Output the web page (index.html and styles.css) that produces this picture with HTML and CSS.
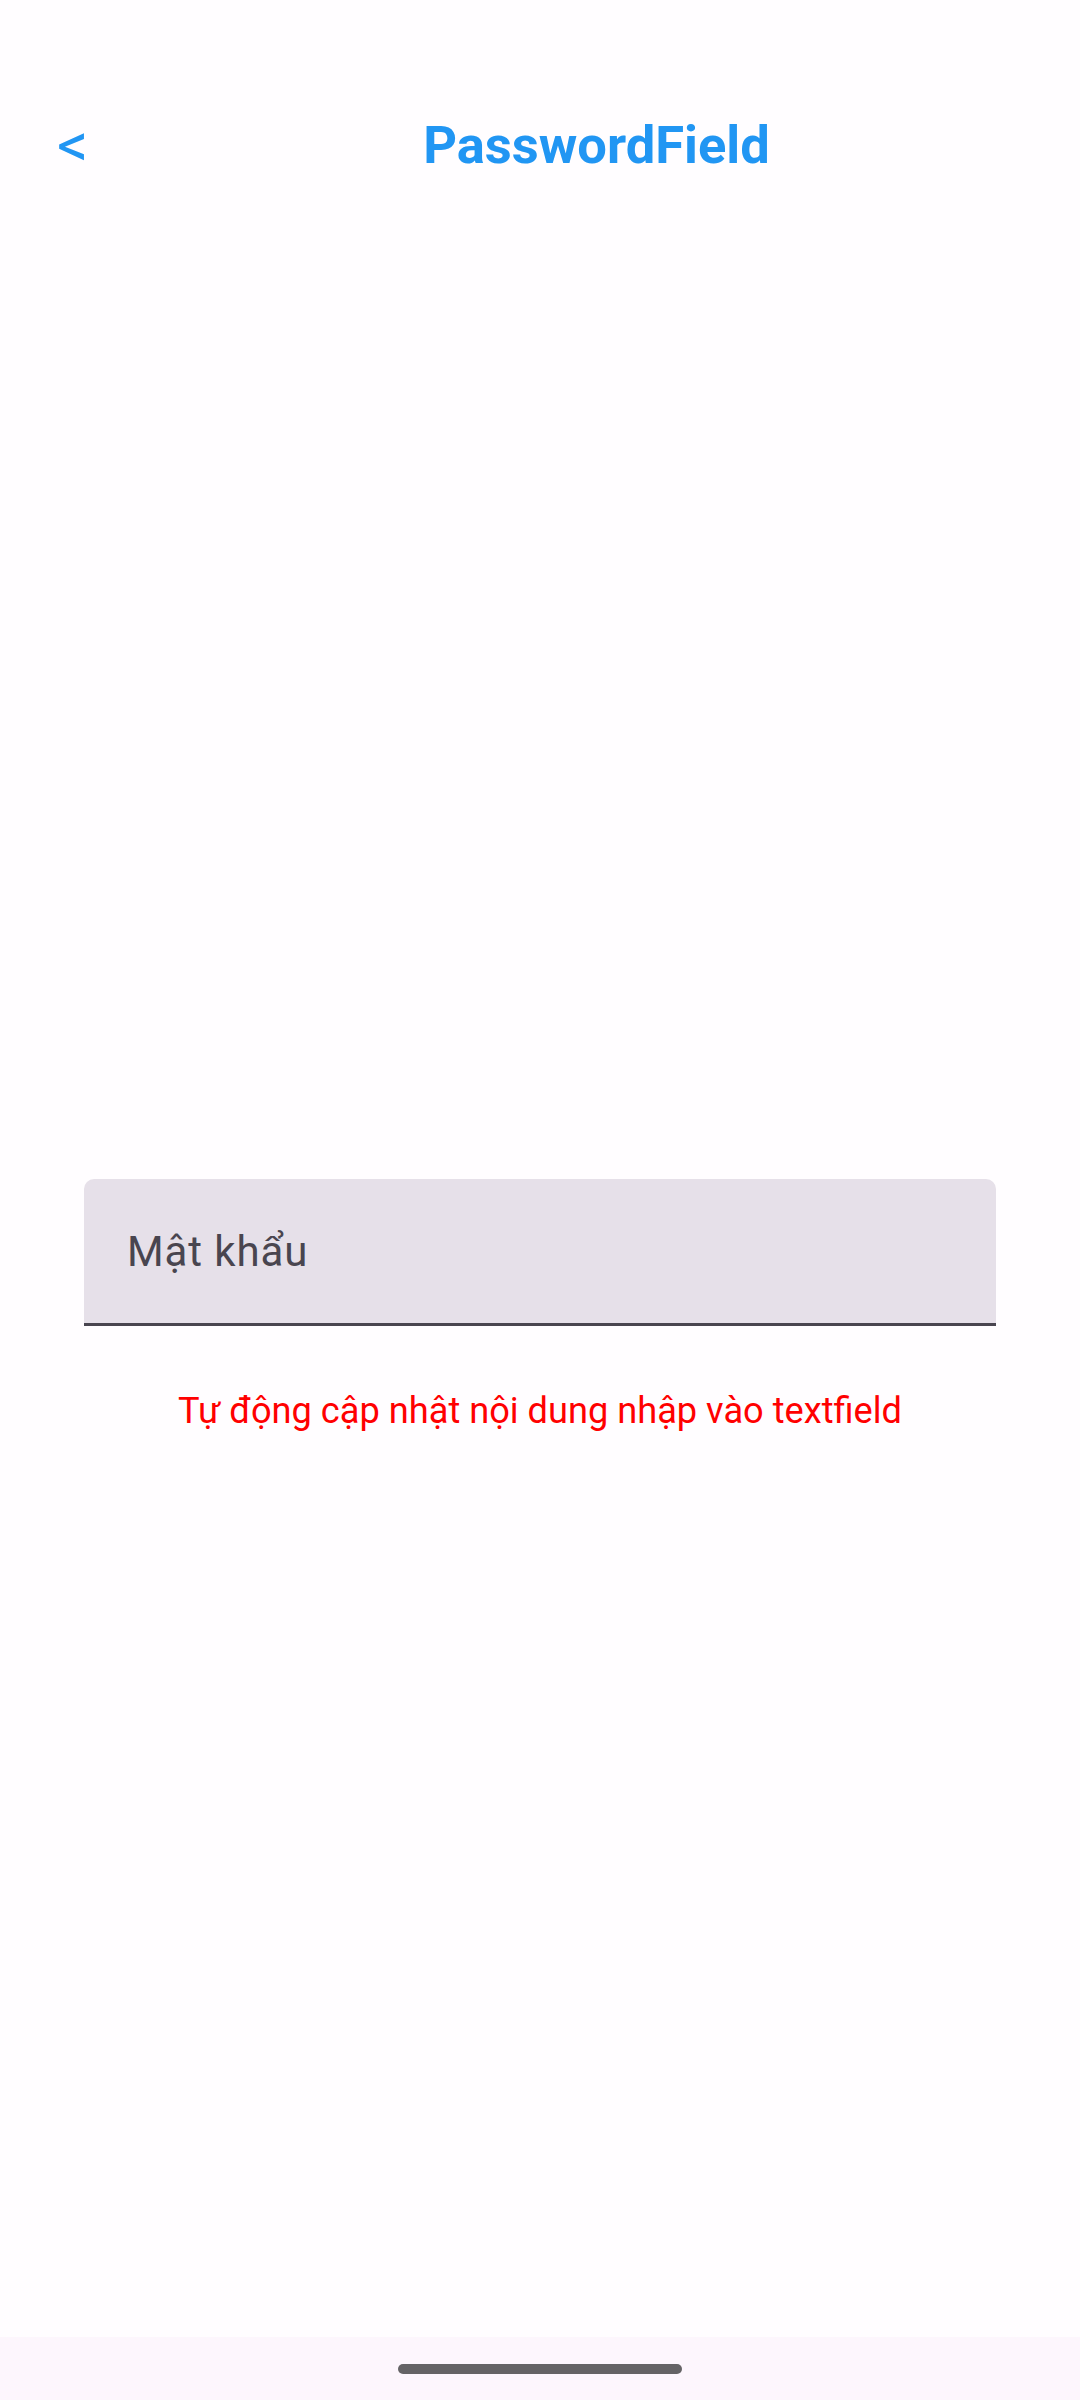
FILE: index.html
```html
<!DOCTYPE html>
<html lang="vi">
<head>
<meta charset="utf-8">
<title>PasswordField</title>
<link rel="stylesheet" href="styles.css">
</head>
<body>
<div class="screen">
  <header class="topbar">
    <div class="back">&lt;</div>
    <div class="title">PasswordField</div>
  </header>
  <main class="content">
    <div class="field">
      <span class="label">Mật khẩu</span>
    </div>
    <p class="hint">Tự động cập nhật nội dung nhập vào textfield</p>
  </main>
  <footer class="navbar">
    <div class="handle"></div>
  </footer>
</div>
</body>
</html>
```
FILE: styles.css
```css
html, body {
  margin: 0;
  padding: 0;
  background: #ffffff;
}
.screen {
  width: 1080px;
  height: 2400px;
  display: flex;
  flex-direction: column;
  font-family: Roboto, "Noto Sans", sans-serif;
  background: #fffdff;
}
.topbar {
  display: flex;
  align-items: center;
  height: 90px;
  margin-top: 100px;
}
.back {
  width: 113px;
  box-sizing: border-box;
  padding-left: 57px;
  color: #2196f3;
  font-size: 62px;
  font-weight: 400;
  line-height: 90px;
}
.title {
  flex: 1;
  text-align: center;
  color: #2196f3;
  font-size: 52.5px;
  font-weight: 700;
  line-height: 90px;
}
.content {
  flex: 1;
  display: flex;
  flex-direction: column;
  align-items: center;
  padding-top: 989px;
}
.field {
  width: 912px;
  height: 144px;
  box-sizing: content-box;
  background: #e6e0e9;
  border-radius: 10px 10px 0 0;
  border-bottom: 3px solid #49454f;
  display: flex;
  align-items: center;
  padding: 0;
}
.label {
  padding-left: 43px;
  font-size: 42px;
  color: #49454f;
  letter-spacing: 0.9px;
}
.hint {
  margin: 60px 0 0;
  color: #ff0000;
  font-size: 36.2px;
  line-height: 50px;
}
.navbar {
  height: 63px;
  background: #fdf6fd;
  display: flex;
  justify-content: center;
  padding-top: 27px;
  box-sizing: border-box;
}
.handle {
  width: 284px;
  height: 10px;
  border-radius: 5px;
  background: #656366;
}
```
